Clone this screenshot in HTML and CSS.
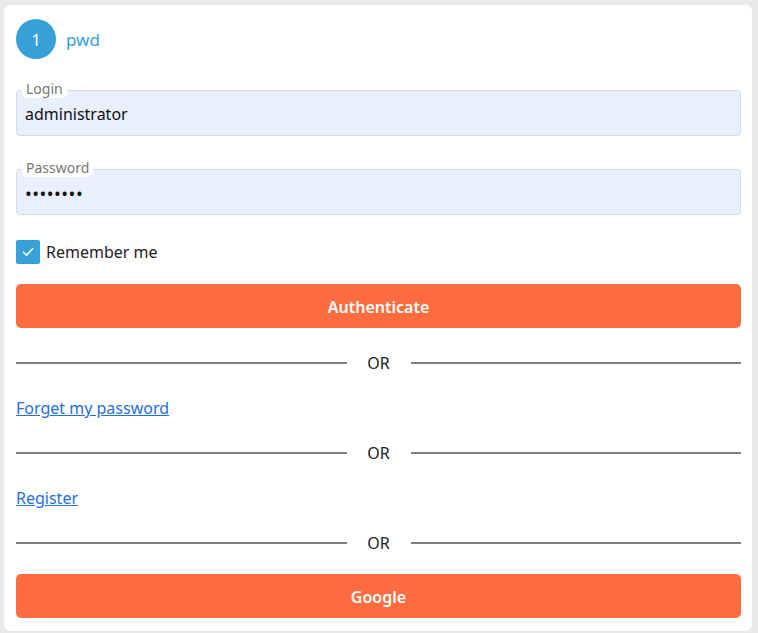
FILE: index.html
```html
<!DOCTYPE html>
<html>
<head>
<meta charset="utf-8">
<link rel="stylesheet" href="styles.css">
</head>
<body>
<div class="card">
  <div class="step">
    <span class="step-num">1</span>
    <span class="step-name">pwd</span>
  </div>
  <div class="field">
    <span class="field-label">Login</span>
    <div class="field-input">administrator</div>
  </div>
  <div class="field">
    <span class="field-label">Password</span>
    <div class="field-input dots">••••••••</div>
  </div>
  <label class="remember">
    <span class="check"><svg width="14" height="14" viewBox="0 0 14 14"><path d="M2.5 7.2 L5.6 10.2 L11.5 3.8" fill="none" stroke="#fff" stroke-width="1.6" stroke-linecap="round" stroke-linejoin="round"/></svg></span>
    <span>Remember me</span>
  </label>
  <button class="btn">Authenticate</button>
  <div class="or first"><span class="line"></span><span class="or-text">OR</span><span class="line"></span></div>
  <a class="link" href="#">Forget my password</a>
  <div class="or"><span class="line"></span><span class="or-text">OR</span><span class="line"></span></div>
  <a class="link" href="#">Register</a>
  <div class="or"><span class="line"></span><span class="or-text">OR</span><span class="line"></span></div>
  <button class="btn last">Google</button>
</div>
</body>
</html>
```
FILE: styles.css
```css
html, body {
  margin: 0;
  padding: 0;
  background: #e9e9e9;
  font-family: "Noto Sans", "Open Sans", sans-serif;
  color: #222;
}
.card {
  margin: 5px 6px 2px 4px;
  background: #fff;
  border-radius: 6px;
  padding: 11px 11px 13px 12px;
  display: flex;
  flex-direction: column;
  height: 602px;
  box-sizing: content-box;
}
.step {
  display: flex;
  align-items: center;
  gap: 10px;
  height: 46px;
}
.step-num {
  width: 40px;
  height: 40px;
  border-radius: 50%;
  background: #36a0d9;
  color: #fff;
  display: flex;
  align-items: center;
  justify-content: center;
  font-size: 17px;
}
.step-name {
  color: #36a0d9;
  font-size: 17px;
}
.field {
  position: relative;
  margin-top: 28px;
}
.field + .field {
  margin-top: 33px;
}
.field-label {
  position: absolute;
  left: 6px;
  top: -10px;
  background: #fff;
  color: #777;
  font-size: 14px;
  line-height: 18px;
  padding: 0 4px;
  border-radius: 5px;
}
.field-input {
  border: 1px solid #d4dbe3;
  background: #e8f0fe;
  border-radius: 4px;
  font-size: 16px;
  line-height: 44px;
  padding: 1px 8px 0;
  box-sizing: border-box;
  height: 46px;
  color: #111;
}
.dots {
  font-size: 18px;
  letter-spacing: 0.5px;
}
.remember {
  display: flex;
  align-items: center;
  gap: 6px;
  margin-top: 25px;
  font-size: 16px;
  height: 24px;
}
.check {
  width: 24px;
  height: 24px;
  background: #36a0d9;
  border-radius: 2px;
  display: flex;
  align-items: center;
  justify-content: center;
}
.btn {
  margin-top: 20px;
  height: 44px;
  border: none;
  border-radius: 5px;
  background: #ff6c40;
  color: #fff;
  font-family: inherit;
  font-weight: 600;
  font-size: 16px;
  width: 100%;
  padding-top: 2px;
}
.or {
  display: flex;
  align-items: center;
  margin-top: 23px;
  height: 22px;
}
.or.first {
  margin-top: 24px;
}
.line {
  flex: 1;
  height: 2px;
  background: #808080;
}
.or-text {
  width: 64px;
  text-align: center;
  font-size: 16px;
  color: #222;
}
.link {
  margin-top: 23px;
  color: #2470e0;
  font-size: 16px;
  align-self: flex-start;
  text-decoration: underline;
  line-height: 22px;
}
.btn.last {
  margin-top: 20px;
}
```
